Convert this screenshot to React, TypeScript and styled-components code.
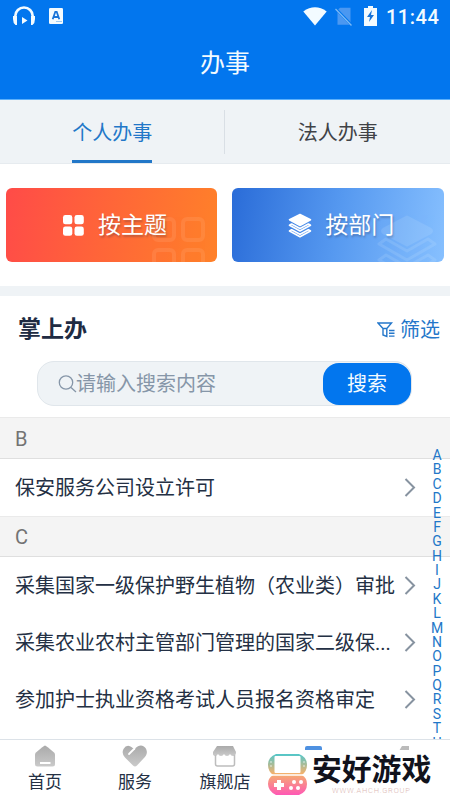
import React from "react";
import styled, { createGlobalStyle } from "styled-components";

const Global = createGlobalStyle`
  * { box-sizing: border-box; }
  body { margin: 0; background: #fff; font-family: Roboto, "Noto Sans CJK SC", sans-serif; }
`;

const Screen = styled.div`
  position: relative;
  width: 450px;
  height: 800px;
  overflow: hidden;
  display: flex;
  flex-direction: column;
  background: #fff;
  color: #243044;
`;

const Header = styled.header`
  flex: none;
  height: 100px;
  background: #0276ee;
  color: #f3fbff;
  border-bottom: 1px solid #5cb0fb;
`;

const StatusBar = styled.div`
  height: 32px;
  padding: 0 10px 0 12px;
  display: flex;
  align-items: center;
`;

const StatusIcons = styled.div`
  display: flex;
  align-items: center;
  gap: 13px;
  flex: 1;
`;

const StatusRight = styled.div`
  display: flex;
  align-items: center;
`;

const SimIcon = styled.svg`
  margin: 0 11px 0 8px;
`;

const Clock = styled.span`
  width: 54px;
  margin-left: 9px;
  padding-top: 1px;
  font: 500 20px/32px Roboto, sans-serif;
  letter-spacing: 0.5px;
  white-space: nowrap;
`;

const PageTitle = styled.h1`
  margin: 0;
  padding-top: 1px;
  height: 63px;
  text-align: center;
  font-weight: 400;
  font-size: 25px;
  line-height: 62px;
`;

const Tabs = styled.nav`
  flex: none;
  display: flex;
  height: 64px;
  background: #eff3f6;
  border-bottom: 1px solid #e6ebef;
`;

const Tab = styled.div<{ $active?: boolean }>`
  flex: 1;
  display: flex;
  justify-content: center;
  padding: 8px 0 0;
  font-size: 20px;
  line-height: 50px;
  color: ${(p) => (p.$active ? "#2277c8" : "#404246")};
  span {
    height: 55px;
    border-bottom: 3px solid ${(p) => (p.$active ? "#2277c8" : "transparent")};
  }
`;

const TabDivider = styled.div`
  width: 1px;
  height: 44px;
  margin: 10px 1px 0 -1px;
  background: #d9dfe5;
`;

const Categories = styled.div`
  flex: none;
  display: flex;
  gap: 15px;
  padding: 24px 6.5px 24px 6px;
  height: 122px;
`;

const CategoryCard = styled.div<{ $bg: string }>`
  position: relative;
  overflow: hidden;
  flex: 1;
  display: flex;
  align-items: center;
  padding-left: 56px;
  border-radius: 6px;
  background: ${(p) => p.$bg};
  color: #fff;
  font-size: 23px;
  line-height: 34px;
  text-shadow: 1px 2px 2px rgba(40, 40, 70, 0.3);
  > svg { flex: none; margin-right: 13px; }
`;

const CardLabel = styled.span`
  padding-top: 2px;
`;

const CardDecoration = styled.div<{ $top: number }>`
  position: absolute;
  right: 6px;
  top: ${(p) => p.$top}px;
  width: 62px;
  height: 60px;
  opacity: 0.12;
  svg { display: block; }
`;

const Band = styled.div`
  flex: none;
  height: 10px;
  background: #eff3f6;
`;

const SectionHead = styled.div`
  flex: none;
  height: 65px;
  padding: 2px 10px 0 18px;
  display: flex;
  align-items: center;
  justify-content: space-between;
`;

const SectionTitle = styled.h2`
  margin: 0;
  font-size: 23px;
  font-weight: 700;
  line-height: 34px;
  color: #202b42;
`;

const FilterButton = styled.div`
  display: flex;
  align-items: center;
  gap: 5px;
  font-size: 20px;
  line-height: 30px;
  color: #2477ca;
`;

const SearchBox = styled.div`
  flex: none;
  width: 375px;
  height: 45px;
  margin: 0 0 11px 37px;
  padding-left: 20px;
  display: flex;
  align-items: center;
  border: 1px solid #e0e6eb;
  border-radius: 17px;
  background: #eff3f6;
  color: #8696a8;
  font-size: 20px;
`;

const Placeholder = styled.span`
  flex: 1;
  margin-left: -1px;
  line-height: 42px;
`;

const SearchButton = styled.div`
  width: 88px;
  height: 42px;
  border-radius: 16px;
  background: #0276ee;
  color: #f3fbff;
  text-align: center;
  line-height: 43px;
  font-size: 20px;
`;

const List = styled.div`
  position: relative;
  flex: 1;
  overflow: hidden;
`;

const GroupHead = styled.div<{ $height: number }>`
  height: ${(p) => p.$height}px;
  padding: 1px 0 0 15px;
  display: flex;
  align-items: center;
  background: #f4f4f4;
  border-top: 1px solid #eaeaea;
  border-bottom: 1px solid #dfdfdf;
  color: #737373;
  font-size: 20px;
`;

const Row = styled.div`
  height: 57px;
  padding: 0 34px 0 15px;
  display: flex;
  align-items: center;
  justify-content: space-between;
  font-size: 20px;
  line-height: 30px;
  white-space: nowrap;
`;

const AlphaIndex = styled.div`
  position: absolute;
  top: 31px;
  right: 5px;
  width: 16px;
  font: 400 14px/14.37px Roboto, sans-serif;
  color: #2277c8;
  text-align: center;
`;

const BottomNav = styled.nav`
  flex: none;
  height: 61px;
  display: flex;
  border-top: 1px solid #dce2e8;
  background: #fff;
`;

const NavItem = styled.div`
  flex: 1;
  display: flex;
  flex-direction: column;
  align-items: center;
  padding-top: 5px;
  font-size: 17px;
  line-height: 25px;
  svg { display: block; margin-bottom: 3px; }
`;

const Brand = styled.div`
  position: absolute;
  left: 262px;
  top: 750px;
  width: 188px;
  height: 50px;
  display: flex;
  background: #fff;
  padding: 3px 0 0 5px;
`;

const BrandText = styled.div`
  margin-left: 4px;
  color: #11121c;
  white-space: nowrap;
`;

const BrandName = styled.div`
  margin-top: -4px;
  font: 700 29.8px/36px "Noto Sans CJK SC", sans-serif;
`;

const BrandUrl = styled.div`
  width: 90px;
  margin: 1px 0 0 20px;
  color: #dcb9b5;
  font: 300 7.5px/10px Roboto, sans-serif;
  letter-spacing: 0.75px;
`;

const GridIcon = () => (
  <svg width="23" height="23" viewBox="0 0 23 23" fill="#fff">
    {[1, 12.5].map((x) => [1, 12.5].map((y) => <rect key={`${x}-${y}`} x={x} y={y} width="9.3" height="9.3" rx="2.4" />))}
  </svg>
);

const LayersIcon = () => (
  <svg width="24" height="25" viewBox="0 0 24 25" fill="none" stroke="#fff" strokeWidth="1.6" strokeLinejoin="round">
    <path d="m12 1.5 10.500 5.200L12 12.500 1.500 6.700Z" fill="#fff" />
    <path d="m3.600 11-2.100 1.300L12 18l10.500-5.700-2.100-1.300L12 15.500Z" />
    <path d="m3.600 16.700-2.100 1.300L12 23.700 22.500 18l-2.100-1.300L12 21.200Z" />
  </svg>
);

const Chevron = () => (
  <svg width="12" height="20" viewBox="0 0 12 20" fill="none" stroke="#8793a0" strokeWidth="2">
    <path d="m1.500 1 8.500 8.500-8.500 8.500" />
  </svg>
);

const navGradient = (
  <defs>
    <linearGradient id="nav" x1="0" y1="0" x2="0" y2="1">
      <stop stopColor="#aaa" />
      <stop offset="1" stopColor="#cacaca" />
    </linearGradient>
  </defs>
);

const alphabet = "ABCDEFGHIJKLMNOPQRSTU".split("");
const groups = [
  { letter: "B", height: 42, rows: ["保安服务公司设立许可"] },
  { letter: "C", height: 41, rows: ["采集国家一级保护野生植物（农业类）审批", "采集农业农村主管部门管理的国家二级保...", "参加护士执业资格考试人员报名资格审定"] },
];

export default function App() {
  return (
    <Screen>
      <Global />
      <Header>
        <StatusBar>
          <StatusIcons>
            <svg width="24" height="22" viewBox="0 0 24 22">
              <path d="M3.300 18V11a8.700 8.500 0 0 1 17.400 0v7" fill="none" stroke="#f3fbff" strokeWidth="2.600" />
              <path d="M1 11h4v9H3.500Q1 18 1 14ZM23 11h-4v9h1.500Q23 18 23 14ZM10 12l5.500 3.500L10 19Z" fill="#f3fbff" />
            </svg>
            <svg width="14" height="16" viewBox="0 0 14 16">
              <rect width="14" height="16" rx="1.3" fill="#f3fbff" />
              <path d="m3.700 11.300 2.600-7.500h1.400l2.600 7.500M4.700 9h4.600" fill="none" stroke="#1773d8" strokeWidth="1.8" />
              <path d="M7 13.500h6" stroke="#77b5ed" strokeWidth=".7" />
            </svg>
          </StatusIcons>
          <StatusRight>
            <svg width="24" height="19" viewBox="0 0 24 19"><path d="M.3 4.400Q12-4 23.700 4.400L12 18.600Z" fill="#f3fbff" /></svg>
            <SimIcon width="18" height="19" viewBox="0 0 18 19">
              <path d="M5 .8h10.500v17H2.500V3Z" fill="#4b98f1" />
              <path d="m1 2 16 16.500" stroke="#0276ee" strokeWidth="2.600" />
              <path d="m.5 2 16 16.500" stroke="#7bb9f5" strokeWidth="1.300" />
            </SimIcon>
            <svg width="13" height="20" viewBox="0 0 13 20">
              <path d="M4 0h5v2h4v18H0V2h4Z" fill="#f3fbff" />
              <path d="m8 4-5 7h3l-1 5 5-7H7Z" fill="#1773d8" />
            </svg>
            <Clock>11:44</Clock>
          </StatusRight>
        </StatusBar>
        <PageTitle>办事</PageTitle>
      </Header>
      <Tabs>
        <Tab $active><span>个人办事</span></Tab>
        <TabDivider />
        <Tab><span>法人办事</span></Tab>
      </Tabs>
      <Categories>
        <CategoryCard $bg="linear-gradient(100deg, #ff4b48, #ff6439 45%, #ff8129)">
          <GridIcon />
          <CardLabel>按主题</CardLabel>
          <CardDecoration $top={26}>
            <svg width="62" height="60" viewBox="0 0 62 60" fill="none" stroke="#ffd0b0" strokeWidth="4">
              <rect x="5" y="5" width="20" height="21" rx="4" /><rect x="34" y="5" width="20" height="21" rx="4" />
              <rect x="5" y="36" width="20" height="22" rx="4" /><rect x="34" y="36" width="20" height="22" rx="4" />
            </svg>
          </CardDecoration>
        </CategoryCard>
        <CategoryCard $bg="linear-gradient(100deg, #2a6cd8, #5699f0 50%, #87c0ff)">
          <LayersIcon />
          <CardLabel>按部门</CardLabel>
          <CardDecoration $top={25}>
            <svg width="62" height="60" viewBox="0 0 62 60" fill="none" stroke="#e0f1ff" strokeWidth="3" strokeLinejoin="round">
              <path d="M31 4 54 16q3 2 0 4L31 32 8 20q-3-2 0-4Z" fill="#e0f1ff" />
              <path d="m10 26-7 5 28 16 28-16-7-5-21 12Z" /><path d="m10 42-7 5 28 16 28-16-7-5-21 12Z" />
            </svg>
          </CardDecoration>
        </CategoryCard>
      </Categories>
      <Band />
      <SectionHead>
        <SectionTitle>掌上办</SectionTitle>
        <FilterButton>
          <svg width="18" height="16" viewBox="0 0 18 16" fill="none" stroke="#2477ca" strokeWidth="1.4">
            <path d="M1 1h13.500L9.800 6.500v8L6 13V6.500ZM6 6.500h4M12 8.500h5.500M12 11.300h5.500M12 14.100h5.500" />
          </svg>
          筛选
        </FilterButton>
      </SectionHead>
      <SearchBox>
        <svg width="19" height="19" viewBox="0 0 19 19" fill="none" stroke="#8696a8" strokeWidth="1.3">
          <circle cx="8" cy="8.500" r="6.700" /><path d="m13 13.500 5 4.500" />
        </svg>
        <Placeholder>请输入搜索内容</Placeholder>
        <SearchButton>搜索</SearchButton>
      </SearchBox>
      <List>
        {groups.map((g) => (
          <React.Fragment key={g.letter}>
            <GroupHead $height={g.height}>{g.letter}</GroupHead>
            {g.rows.map((r) => <Row key={r}><span>{r}</span><Chevron /></Row>)}
          </React.Fragment>
        ))}
        <AlphaIndex>{alphabet.map((l) => <div key={l}>{l}</div>)}</AlphaIndex>
      </List>
      <BottomNav>
        <NavItem>
          <svg width="22" height="22" viewBox="0 0 22 22">{navGradient}
            <path d="M11 .5Q12 .5 20 7.500q1 1 1 2V19q0 2.500-2.500 2.500h-15Q1 21.500 1 19V9.500q0-1 1-2Q10 .5 11 .5Z" fill="url(#nav)" />
            <path d="M6 18h10.500" stroke="#fff" strokeWidth="2" />
          </svg>
          首页
        </NavItem>
        <NavItem>
          <svg width="26" height="22" viewBox="0 0 26 22">
            <path d="M13 3.500C17-.5 21-.3 23.500 3 26 7 25 10 21.500 13.500L15 20.500q-2 2-4 0L3 12.500Q-.8 8.500 1.500 4 4-.2 8 1.200q2 1 3 2Z" fill="url(#nav)" />
            <path d="m7 9 5.500-5.500" stroke="#fff" strokeWidth="1.8" strokeLinecap="round" />
          </svg>
          服务
        </NavItem>
        <NavItem>
          <svg width="24" height="22" viewBox="0 0 24 22">
            <path d="M4 1h16l3 6q0 4-3 4-2 0-3-2-1 2-3 2t-3-2q-1 2-3 2t-3-2q-1 2-3 2-3-1-2-4Z" fill="url(#nav)" />
            <path d="M2.500 10v9q0 2 2 2h15q2 0 2-2v-9" fill="none" stroke="#bdbdbd" strokeWidth="1.500" />
          </svg>
          旗舰店
        </NavItem>
        <NavItem>
          <svg width="22" height="22" viewBox="0 0 22 22"><rect x="1" y="1" width="17" height="18" rx="2" fill="#4e91e1" /></svg>
        </NavItem>
        <NavItem>
          <svg width="22" height="22" viewBox="0 0 22 22"><path d="M8 1h7v5H5Z" fill="#bbb" /></svg>
        </NavItem>
      </BottomNav>
      <Brand>
        <svg width="41" height="43" viewBox="0 0 41 43">
          <defs>
            <linearGradient id="console" x1="0" y1="0" x2="0" y2="1">
              <stop stopColor="#52c7ca" /><stop offset=".48" stopColor="#f4b16c" /><stop offset="1" stopColor="#ff58b5" />
            </linearGradient>
          </defs>
          <path d="M9 1h23q8 3 8 11 0 6-5 10 5 3 5 9 0 8-8 11H9Q1 38 1 31q0-6 5-9-5-4-5-10Q1 4 9 1Z" fill="url(#console)" />
          <rect x="7.500" y="3" width="26" height="17" rx="1" fill="#fff" />
          <path d="M3 22h35" stroke="#fff" strokeWidth="1.500" />
          <path d="M7 32h10M12 27v10" stroke="#fff" strokeWidth="4" />
          <g fill="#fff"><circle cx="27" cy="29" r="2" /><circle cx="34" cy="29" r="2" /><circle cx="24" cy="35" r="2" /><circle cx="31" cy="35" r="2" /><circle cx="4" cy="9" r=".7" /><circle cx="4" cy="13" r=".7" /><circle cx="37" cy="9" r=".7" /><circle cx="37" cy="13" r=".7" /></g>
        </svg>
        <BrandText>
          <BrandName>安好游戏</BrandName>
          <BrandUrl>WWW.AHCH.GROUP</BrandUrl>
        </BrandText>
      </Brand>
    </Screen>
  );
}
